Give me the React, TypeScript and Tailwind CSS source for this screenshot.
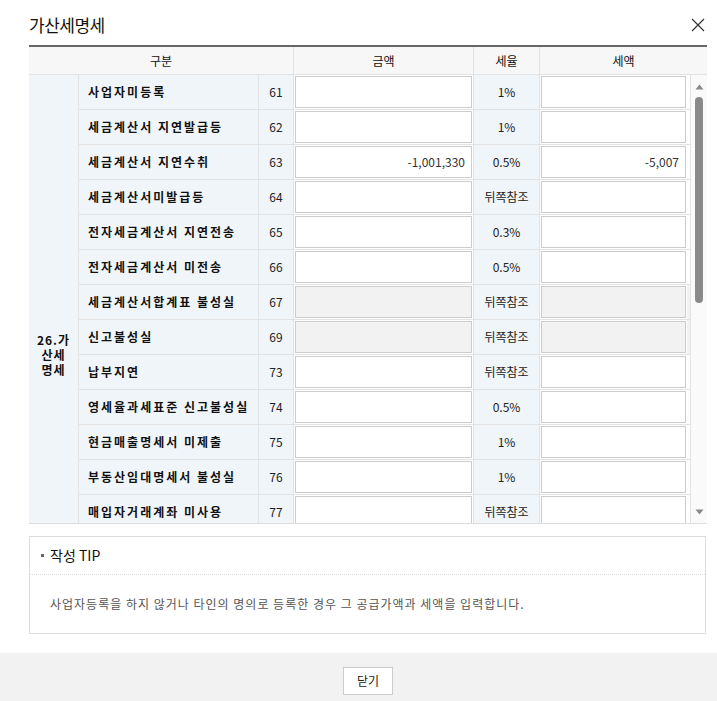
import React from 'react';

type Row = {
  name: string;
  no: string;
  rate: string;
  amount?: string;
  tax?: string;
  disabled?: boolean;
};

const rows: Row[] = [
  { name: '사업자미등록', no: '61', rate: '1%' },
  { name: '세금계산서 지연발급등', no: '62', rate: '1%' },
  { name: '세금계산서 지연수취', no: '63', rate: '0.5%', amount: '-1,001,330', tax: '-5,007' },
  { name: '세금계산서미발급등', no: '64', rate: '뒤쪽참조' },
  { name: '전자세금계산서 지연전송', no: '65', rate: '0.3%' },
  { name: '전자세금계산서 미전송', no: '66', rate: '0.5%' },
  { name: '세금계산서합계표 불성실', no: '67', rate: '뒤쪽참조', disabled: true },
  { name: '신고불성실', no: '69', rate: '뒤쪽참조', disabled: true },
  { name: '납부지연', no: '73', rate: '뒤쪽참조' },
  { name: '영세율과세표준 신고불성실', no: '74', rate: '0.5%' },
  { name: '현금매출명세서 미제출', no: '75', rate: '1%' },
  { name: '부동산임대명세서 불성실', no: '76', rate: '1%' },
  { name: '매입자거래계좌 미사용', no: '77', rate: '뒤쪽참조' },
];

const font = { fontFamily: '"Noto Sans CJK KR", "Noto Sans", sans-serif' };

function Input({ value, disabled }: { value?: string; disabled?: boolean }) {
  return (
    <div
      className={`h-full w-full border border-[#cccccc] flex items-center justify-end pr-[6px] text-[12px] text-[#333] ${
        disabled ? 'bg-[#f2f2f2]' : 'bg-white'
      }`}
    >
      {value}
    </div>
  );
}

function TableRow({ row }: { row: Row }) {
  return (
    <div className="grid grid-cols-[180px_35px_180px_66px_147px_4px] h-[35px] border-b border-[#e3e3e3]">
      <div className="bg-[#f0f5f9] border-r border-[#e3e3e3] flex items-center pl-[9px] text-[12px] font-bold text-[#111] tracking-[2px] whitespace-nowrap">
        {row.name}
      </div>
      <div className="bg-[#f0f5f9] border-r border-[#e3e3e3] flex items-center justify-center text-[12px] text-[#222]">
        {row.no}
      </div>
      <div className="p-[1px] border-r border-[#e3e3e3]">
        <Input value={row.amount} disabled={row.disabled} />
      </div>
      <div className="bg-[#f0f5f9] border-r border-[#e3e3e3] flex items-center justify-center text-[12px] text-[#222]">
        {row.rate}
      </div>
      <div className="p-[1px]">
        <Input value={row.tax} disabled={row.disabled} />
      </div>
      <div className={`border-r border-[#e3e3e3] ${row.disabled ? 'bg-[#f2f2f2]' : 'bg-white'}`} />
    </div>
  );
}

function Scrollbar() {
  return (
    <div className="w-[16px] bg-[#fafafa] flex flex-col items-center">
      <svg width="9" height="6" viewBox="0 0 9 6" className="mt-[9px]">
        <path d="M0.5 5.5 L4.5 0.5 L8.5 5.5 Z" fill="#8a8a8a" />
      </svg>
      <div className="mt-[7px] w-[8px] h-[206px] rounded-full bg-[#8a8a8a]" />
      <div className="flex-1" />
      <svg width="9" height="6" viewBox="0 0 9 6" className="mb-[8px]">
        <path d="M0.5 0.5 L8.5 0.5 L4.5 5.5 Z" fill="#8a8a8a" />
      </svg>
    </div>
  );
}

export default function App() {
  return (
    <div className="w-[717px] h-[701px] bg-white flex flex-col text-[#222]" style={font}>
      <div className="flex-1 pl-[29px] pr-[10px]">
        {/* Title */}
        <div className="flex items-center justify-between h-[45px] pt-[4px]">
          <h1 className="text-[17px] text-[#111] tracking-[-0.5px]">가산세명세</h1>
          <button className="w-[16px] h-[16px]">
            <svg width="14" height="14" viewBox="0 0 14 14">
              <path d="M1 1 L13 13 M13 1 L1 13" stroke="#333" strokeWidth="1.2" />
            </svg>
          </button>
        </div>

        {/* Table */}
        <div className="border-t-2 border-[#666] border-b border-b-[#dddddd]">
          <div className="grid grid-cols-[265px_180px_66px_167px] h-[28px] bg-[#f7f7f7] border-b border-[#e3e3e3] text-[12px] text-[#111]">
            <div className="flex items-center justify-center border-r border-[#e3e3e3]">구분</div>
            <div className="flex items-center justify-center border-r border-[#e3e3e3]">금액</div>
            <div className="flex items-center justify-center border-r border-[#e3e3e3]">세율</div>
            <div className="flex items-center justify-center">세액</div>
          </div>
          <div className="flex h-[448px] overflow-hidden">
            <div className="flex-1 overflow-hidden">
              <div className="flex h-[558px]">
                <div className="w-[50px] bg-[#f0f5f9] border-r border-[#e3e3e3] flex items-center justify-center text-center text-[12px] font-bold leading-[15px] tracking-[1px] text-[#111]">
                  26.가
                  <br />
                  산세
                  <br />
                  명세
                </div>
                <div className="flex-1">
                  {rows.map((r) => (
                    <TableRow key={r.no} row={r} />
                  ))}
                </div>
              </div>
            </div>
            <Scrollbar />
          </div>
        </div>

        {/* Tip */}
        <div className="mt-[12px] mr-[1px] border border-[#dddddd]">
          <div className="h-[38px] flex items-center pl-[11px] border-b border-dotted border-[#dddddd]">
            <span className="w-[3px] h-[3px] bg-[#666] mr-[6px]" />
            <span className="text-[14px] text-[#111]">작성 TIP</span>
          </div>
          <div className="h-[58px] flex items-center pl-[20px] text-[12px] text-[#555] tracking-[1px]">
            사업자등록을 하지 않거나 타인의 명의로 등록한 경우 그 공급가액과 세액을 입력합니다.
          </div>
        </div>
      </div>

      {/* Footer */}
      <div className="h-[48px] bg-[#f2f2f2] flex items-center justify-center pl-[19px]">
        <button className="w-[50px] h-[28px] bg-white border border-[#cccccc] text-[12px] text-[#222] mt-[8px]">
          닫기
        </button>
      </div>
    </div>
  );
}
